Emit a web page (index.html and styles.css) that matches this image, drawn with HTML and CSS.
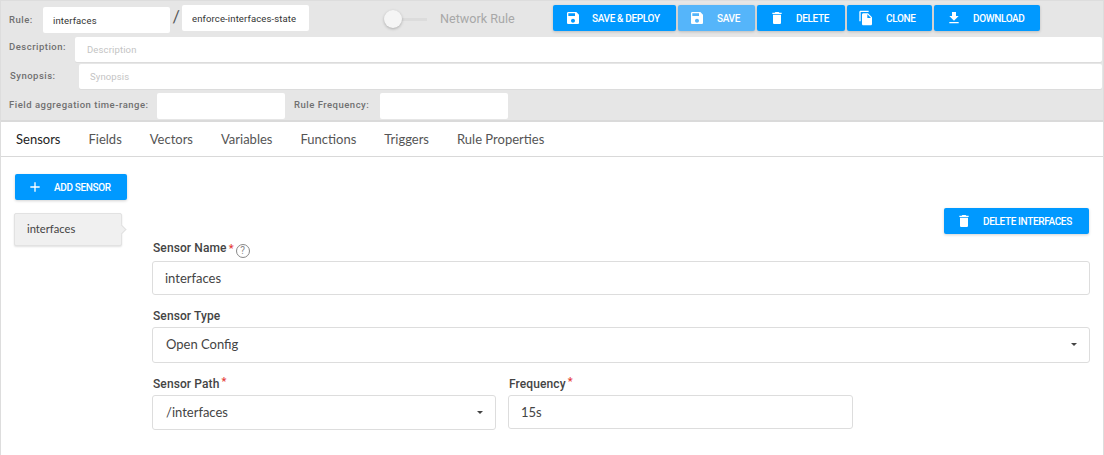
FILE: index.html
```html
<!DOCTYPE html>
<html>
<head>
<meta charset="UTF-8">
<title>Rule Editor</title>
<link rel="stylesheet" href="styles.css">
</head>
<body>
<svg class="defs" width="0" height="0">
	<symbol id="i-save" viewBox="0 0 24 24"><path d="M17 3H5c-1.11 0-2 .9-2 2v14c0 1.1.89 2 2 2h14c1.1 0 2-.9 2-2V7l-4-4zm-5 16c-1.66 0-3-1.34-3-3s1.34-3 3-3 3 1.34 3 3-1.34 3-3 3zm3-10H5V5h10v4z"/></symbol>
	<symbol id="i-delete" viewBox="0 0 24 24"><path d="M6 19c0 1.1.9 2 2 2h8c1.1 0 2-.9 2-2V7H6v12zM19 4h-3.5l-1-1h-5l-1 1H5v2h14V4z"/></symbol>
	<symbol id="i-copy" viewBox="0 0 24 24"><path d="M16 1H4c-1.1 0-2 .9-2 2v14h2V3h12V1zm-1 4l6 6v10c0 1.1-.9 2-2 2H7.99C6.89 23 6 22.1 6 21l.01-14c0-1.1.89-2 1.99-2h7zm-1 7h5.5L14 6.5V12z"/></symbol>
	<symbol id="i-download" viewBox="0 0 24 24"><path d="M19 9h-4V3H9v6H5l7 7 7-7zM5 18v2h14v-2H5z"/></symbol>
	<symbol id="i-add" viewBox="0 0 24 24"><path d="M19 13h-6v6h-2v-6H5v-2h6V5h2v6h6v2z"/></symbol>
</svg>

<div class="page">
	<div class="header">
		<div class="row row-rule">
			<label class="head-label label-rule">Rule:</label>
			<input class="head-input input-group" type="text" value="interfaces">
			<span class="slash">/</span>
			<input class="head-input input-name" type="text" value="enforce-interfaces-state">
			<div class="toggle"><span class="toggle-knob"></span></div>
			<span class="toggle-text">Network Rule</span>
			<div class="actions">
				<button class="btn btn-deploy"><svg class="icon"><use href="#i-save"/></svg><span>SAVE &amp; DEPLOY</span></button>
				<button class="btn btn-save"><svg class="icon"><use href="#i-save"/></svg><span>SAVE</span></button>
				<button class="btn btn-delete"><svg class="icon"><use href="#i-delete"/></svg><span>DELETE</span></button>
				<button class="btn btn-clone"><svg class="icon"><use href="#i-copy"/></svg><span>CLONE</span></button>
				<button class="btn btn-download"><svg class="icon"><use href="#i-download"/></svg><span>DOWNLOAD</span></button>
			</div>
		</div>
		<div class="row row-desc">
			<label class="head-label label-desc">Description:</label>
			<input class="head-input input-wide input-desc" type="text" placeholder="Description">
		</div>
		<div class="row row-syn">
			<label class="head-label label-syn">Synopsis:</label>
			<input class="head-input input-wide" type="text" placeholder="Synopsis">
		</div>
		<div class="row row-freq">
			<label class="head-label label-agg">Field aggregation time-range:</label>
			<input class="head-input input-small" type="text">
			<label class="head-label label-freq">Rule Frequency:</label>
			<input class="head-input input-small" type="text">
		</div>
	</div>

	<div class="tabs">
		<a class="tab active">Sensors</a>
		<a class="tab">Fields</a>
		<a class="tab">Vectors</a>
		<a class="tab">Variables</a>
		<a class="tab">Functions</a>
		<a class="tab">Triggers</a>
		<a class="tab">Rule Properties</a>
	</div>

	<div class="content">
		<div class="side">
			<button class="btn btn-add"><svg class="icon"><use href="#i-add"/></svg><span>ADD SENSOR</span></button>
			<div class="side-item">interfaces</div>
		</div>
		<div class="main">
			<div class="main-top">
				<button class="btn btn-remove"><svg class="icon"><use href="#i-delete"/></svg><span>DELETE INTERFACES</span></button>
			</div>
			<div class="field field-name">
				<label class="field-label">Sensor Name <span class="req">*</span><span class="help">?</span></label>
				<input class="field-input" type="text" value="interfaces">
			</div>
			<div class="field field-type">
				<label class="field-label">Sensor Type</label>
				<div class="select-wrap">
					<select class="field-input field-select"><option>Open Config</option></select>
				</div>
			</div>
			<div class="field-row">
				<div class="field field-path">
					<label class="field-label">Sensor Path <span class="req req-up">*</span></label>
					<div class="select-wrap">
						<select class="field-input field-select select-short"><option>/interfaces</option></select>
					</div>
				</div>
				<div class="field field-freq">
					<label class="field-label">Frequency <span class="req req-up">*</span></label>
					<input class="field-input" type="text" value="15s">
				</div>
			</div>
		</div>
	</div>
</div>
</body>
</html>
```

FILE: styles.css
```css
*
{
	box-sizing: border-box;
}

body
{
	margin: 0;
	font-family: "Lato", sans-serif;
	background-color: #ffffff;
	color: #333333;
}

.defs
{
	display: block;
	height: 0;
}

.page
{
	height: 455px;
	overflow: hidden;
	border-left: 1px solid #dddddd;
	border-right: 1px solid #dddddd;
}

/* header block */

.header
{
	height: 122px;
	padding-top: 5px;
	background-color: #e6e6e6;
	border-top: 1px solid #dddddd;
	border-bottom: 2px solid #dadada;
}

.row
{
	display: flex;
	align-items: flex-start;
}

.row-rule
{
	height: 32px;
	margin-top: -1px;
}

.row-desc, .row-syn
{
	height: 27px;
}

.row-freq
{
	height: 27px;
	margin-top: 2px;
}

.head-label
{
	font-family: "Roboto", sans-serif;
	font-size: 9.5px;
	font-weight: 500;
	color: #707070;
	letter-spacing: 0.5px;
}

.head-input
{
	height: 26px;
	border: none;
	border-radius: 2px;
	background-color: #ffffff;
	padding: 0 10px;
	font-family: "Roboto", sans-serif;
	font-size: 9.5px;
	letter-spacing: 0.13px;
	color: #333333;
	outline: none;
}

.head-input::placeholder
{
	color: #c4c4c4;
}

.label-rule
{
	width: 34px;
	margin: 9px 0 0 8px;
}

.input-group
{
	width: 127px;
	margin-top: 2px;
}

.slash
{
	width: 12px;
	text-align: center;
	font-size: 17px;
	color: #555555;
	margin-top: 1px;
}

.input-name
{
	width: 127px;
}

.toggle
{
	position: relative;
	width: 34px;
	height: 3px;
	margin: 13px 0 0 84px;
	background-color: #dcdcdc;
}

.toggle-knob
{
	position: absolute;
	left: -9px;
	top: -8px;
	width: 18px;
	height: 18px;
	border-radius: 50%;
	background-color: #f5f5f5;
	box-shadow: 0 1px 3px rgba(0, 0, 0, 0.25);
}

.toggle-text
{
	margin: 6px 0 0 13px;
	width: 113px;
	font-family: "Roboto", sans-serif;
	font-size: 12.6px;
	color: #a8a8a8;
}

.actions
{
	display: flex;
	gap: 2px;
}

.btn
{
	display: flex;
	align-items: center;
	height: 26px;
	padding: 0;
	border: none;
	border-radius: 2px;
	background-color: #0099ff;
	color: #ffffff;
	font-family: "Roboto", sans-serif;
	font-size: 10px;
	font-weight: 500;
	letter-spacing: -0.35px;
	white-space: nowrap;
	box-shadow: 0 1px 3px rgba(0, 0, 0, 0.18);
}

.icon
{
	width: 16px;
	height: 16px;
	fill: #ffffff;
	flex: none;
}

.btn-deploy
{
	width: 123px;
	padding-left: 12px;
}

.btn-deploy span
{
	margin-left: 11px;
}

.btn-save
{
	width: 77px;
	padding-left: 11px;
	background-color: #55b5fa;
}

.btn-save span
{
	margin-left: 12px;
}

.btn-delete
{
	width: 88px;
	padding-left: 12px;
}

.btn-delete span
{
	margin-left: 11px;
}

.btn-clone
{
	width: 85px;
	padding-left: 11px;
}

.btn-clone span
{
	margin-left: 12px;
}

.btn-download
{
	width: 106px;
	padding-left: 12px;
}

.btn-download span
{
	margin-left: 11px;
}

.label-desc
{
	width: 66px;
	margin: 4px 0 0 8px;
}

.label-syn
{
	width: 69px;
	margin: 6px 0 0 9px;
}

.input-wide
{
	flex: 1;
	height: 25px;
	padding-left: 11px;
	margin-right: 1px;
	box-shadow: 0 1px 0 #dcdcdc;
}

.input-desc
{
	padding-left: 12px;
}

.label-agg
{
	width: 148px;
	margin: 6px 0 0 8px;
}

.label-freq
{
	width: 86px;
	margin: 6px 0 0 9px;
}

.input-small
{
	width: 128px;
}

/* tabs */

.tabs
{
	display: flex;
	gap: 28px;
	height: 35px;
	align-items: center;
	padding-left: 15px;
	border-bottom: 1px solid #d9d9d9;
	font-size: 13px;
	color: #555555;
}

.tab.active
{
	color: #222222;
}

/* sensors */

.content
{
	display: flex;
	padding: 17px 13px 0 14px;
}

.side
{
	width: 137px;
	flex: none;
}

.btn-add
{
	width: 112px;
	padding-left: 12px;
}

.btn-add span
{
	margin-left: 11px;
}

.side-item
{
	position: relative;
	width: 108px;
	height: 33px;
	margin: 13px 0 0 -1px;
	padding: 8px 0 0 12px;
	background-color: #f0f0f0;
	border: 1px solid #e2e2e2;
	border-radius: 2px;
	box-shadow: 0 1px 2px rgba(0, 0, 0, 0.12);
	font-size: 11.2px;
	color: #444444;
}

.side-item::after
{
	content: "";
	position: absolute;
	right: -4px;
	top: 12px;
	width: 6px;
	height: 6px;
	background-color: #f0f0f0;
	border-top: 1px solid #e2e2e2;
	border-right: 1px solid #e2e2e2;
	transform: rotate(45deg);
}

.main
{
	flex: 1;
	padding-top: 34px;
}

.main-top
{
	display: flex;
	justify-content: flex-end;
	padding-right: 1px;
	height: 33px;
}

.btn-remove
{
	width: 145px;
	padding-left: 12px;
}

.btn-remove span
{
	margin-left: 11px;
}

.field-label
{
	display: block;
	height: 20px;
	margin-left: 1px;
	font-family: "Roboto", sans-serif;
	font-size: 12px;
	font-weight: 500;
	letter-spacing: 0.1px;
	color: #444444;
}

.field-type .field-label, .field-row .field-label
{
	height: 18px;
}

.req
{
	margin-left: -1px;
	font-size: 11px;
	color: #e53935;
}

.req-up
{
	position: relative;
	top: -3px;
}

.help
{
	display: inline-block;
	width: 14px;
	height: 14px;
	margin-left: 2px;
	border: 1px solid #888888;
	border-radius: 50%;
	font-size: 10px;
	font-weight: 400;
	line-height: 12px;
	text-align: center;
	color: #888888;
	vertical-align: -2px;
}

.field-input
{
	display: block;
	width: 100%;
	height: 34px;
	padding: 0 12px;
	border: 1px solid #dddddd;
	border-radius: 3px;
	background-color: #ffffff;
	font-family: "Lato", sans-serif;
	font-size: 13px;
	color: #444444;
	outline: none;
}

.field-select
{
	appearance: none;
	height: 36px;
	padding-left: 13px;
	padding-bottom: 3px;
}

.select-short
{
	height: 35px;
	padding-bottom: 1px;
}

.select-wrap
{
	position: relative;
}

.select-wrap::after
{
	content: "";
	position: absolute;
	right: 13px;
	top: 16px;
	border-left: 3.5px solid transparent;
	border-right: 3.5px solid transparent;
	border-top: 3px solid #444444;
}

.field-type
{
	margin-top: 14px;
}

.field-row
{
	display: flex;
	gap: 12px;
	margin-top: 14px;
}

.field-path
{
	width: 344px;
}

.field-freq
{
	width: 345px;
}
```
